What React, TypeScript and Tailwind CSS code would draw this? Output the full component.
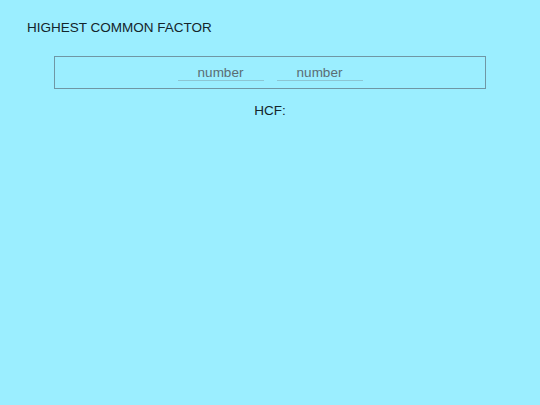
export default function App() {
  return (
    <div className="min-h-screen w-full bg-[#9beeff] text-[#14252b] font-['Liberation_Sans',Arial,sans-serif] pt-[20px]">
      <h1 className="pl-[27px] text-[13.5px] leading-[16px] font-normal">HIGHEST COMMON FACTOR</h1>
      <div className="mx-auto mt-[20px] flex h-[33px] w-[432px] items-start justify-center gap-[13px] border border-[#6f97a5] pt-[7px]">
        <input
          placeholder="number"
          className="h-[17px] w-[86px] border-b border-[#8cc6d4] bg-transparent text-center text-[13.5px] leading-[16px] outline-none placeholder:text-[#5a6d73]"
        />
        <input
          placeholder="number"
          className="h-[17px] w-[86px] border-b border-[#8cc6d4] bg-transparent text-center text-[13.5px] leading-[16px] outline-none placeholder:text-[#5a6d73]"
        />
      </div>
      <p className="mt-[14px] text-center text-[13.5px] leading-[16px]">HCF:</p>
    </div>
  )
}
